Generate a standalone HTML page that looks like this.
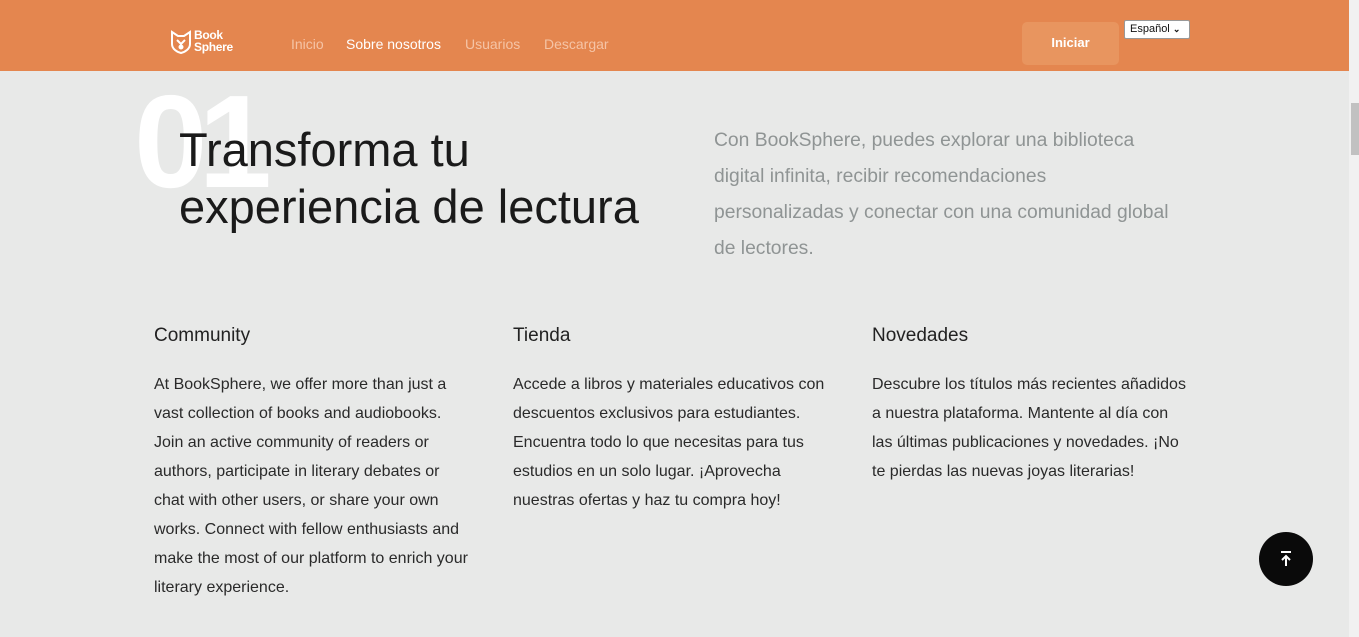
<!DOCTYPE html>
<html><head><meta charset="utf-8"><style>
*{margin:0;padding:0;box-sizing:border-box}
body{width:1359px;height:637px;overflow:hidden;background:#e8e9e8;font-family:"Liberation Sans",sans-serif;position:relative}
.hdr{position:absolute;left:0;top:0;width:1349px;height:71px;background:#e4864f}
.nav a{position:absolute;top:36px;font-size:14px;color:#f5c4a6;text-decoration:none}
.sb{position:absolute;left:1349px;top:0;width:10px;height:637px;background:#f1f1f1}
.thumb{position:absolute;left:1351px;top:103px;width:8px;height:52px;background:#c1c1c1}
.big{position:absolute;left:134px;top:66px;font-size:132px;font-weight:bold;color:#fff;letter-spacing:-9px}
.h1{position:absolute;left:179px;top:121px;font-size:47px;line-height:57px;color:#1a1a1a}
.lead{position:absolute;left:714px;top:123px;width:462px;font-size:19.3px;line-height:36px;color:#8f9494}
.col{position:absolute;top:325px;width:318px}
.col h3{font-size:19px;font-weight:normal;color:#222;margin-bottom:23px}
.col p{font-size:16px;line-height:29px;color:#2a2a2a}
</style></head><body>
<div class="hdr">
<svg style="position:absolute;left:170px;top:30px" width="22" height="24" viewBox="0 0 22 24" fill="none" stroke="#fff" stroke-width="2"><path d="M2 2l6 4h6l6-4v12c0 5-5 8-9 9C7 22 2 19 2 14z"/><path d="M7 10l4 4 4-4"/><circle cx="11" cy="17" r="1.5" fill="#fff"/></svg>
<div style="position:absolute;left:194px;top:29px;color:#fff;font-weight:bold;font-size:12px;line-height:12px;letter-spacing:-0.3px">Book<br>Sphere</div>
<div class="nav"><a style="left:291px">Inicio</a><a style="left:346px;color:#fff">Sobre nosotros</a><a style="left:465px">Usuarios</a><a style="left:544px">Descargar</a></div>
<div style="position:absolute;left:1022px;top:22px;width:97px;height:43px;border-radius:5px;background:#e8955f;color:#fff;font-weight:bold;font-size:13px;text-align:center;line-height:41px">Iniciar</div>
<div style="position:absolute;left:1124px;top:20px;width:66px;height:19px;background:#fff;border:1px solid #999;border-radius:2px;font-size:11px;line-height:17px;padding-left:5px;color:#111">Español <span style="font-size:9px;font-weight:bold">&#x2304;</span></div>
</div>
<div class="big">01</div>
<div class="h1">Transforma tu<br>experiencia de lectura</div>
<div class="lead">Con BookSphere, puedes explorar una biblioteca digital infinita, recibir recomendaciones personalizadas y conectar con una comunidad global de lectores.</div>
<div class="col" style="left:154px"><h3>Community</h3><p>At BookSphere, we offer more than just a vast collection of books and audiobooks. Join an active community of readers or authors, participate in literary debates or chat with other users, or share your own works. Connect with fellow enthusiasts and make the most of our platform to enrich your literary experience.</p></div>
<div class="col" style="left:513px"><h3>Tienda</h3><p>Accede a libros y materiales educativos con descuentos exclusivos para estudiantes. Encuentra todo lo que necesitas para tus estudios en un solo lugar. ¡Aprovecha nuestras ofertas y haz tu compra hoy!</p></div>
<div class="col" style="left:872px"><h3>Novedades</h3><p>Descubre los títulos más recientes añadidos a nuestra plataforma. Mantente al día con las últimas publicaciones y novedades. ¡No te pierdas las nuevas joyas literarias!</p></div>
<div style="position:absolute;left:1259px;top:532px;width:54px;height:54px;border-radius:50%;background:#0a0a0a">
<svg style="position:absolute;left:19px;top:18px" width="16" height="18" viewBox="0 0 16 18" stroke="#fff" stroke-width="2" fill="none"><path d="M3 2h10M8 16V6M4 10l4-4 4 4"/></svg></div>
<div class="sb"></div><div class="thumb"></div>
</body></html>
